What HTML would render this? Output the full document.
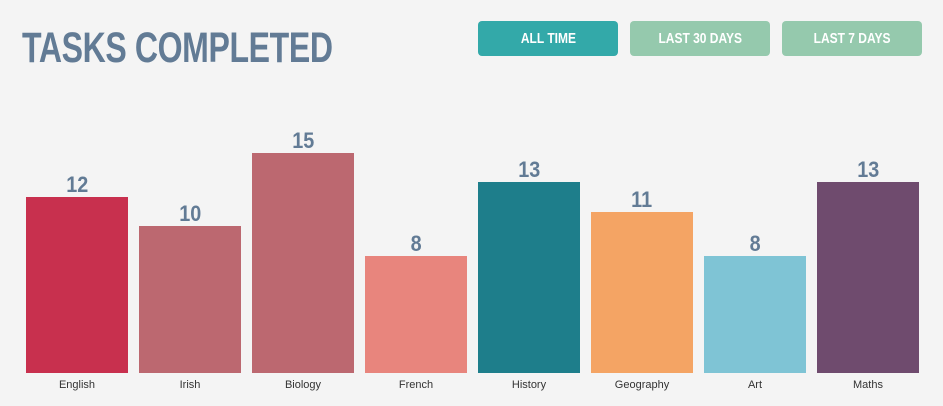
<!DOCTYPE html>
<html><head><style>
body{margin:0;width:943px;height:406px;background:#f4f4f4;font-family:"Liberation Sans",sans-serif;position:relative;overflow:hidden}
.t{position:absolute;left:22px;top:24px;font-size:43px;font-weight:bold;color:#627b95;transform:scaleX(0.745);transform-origin:left top;white-space:nowrap;letter-spacing:-0.5px}
.b{position:absolute;top:21px;width:140px;height:35px;border-radius:4px;color:#fff;font-weight:bold;font-size:15px;line-height:35px;text-align:center}
.b span{display:inline-block;transform:scaleX(0.8)}
.bar{position:absolute;width:102px;bottom:33px}
.n{position:absolute;width:102px;text-align:center;font-weight:bold;font-size:22px;color:#627b95}
.n span{display:inline-block;transform:scaleX(0.9)}
.l{position:absolute;width:102px;text-align:center;top:379px;font-size:11px;color:#333}
</style></head><body>
<div class="t">TASKS COMPLETED</div>
<div class="b" style="left:478px;background:#33a9a9"><span>ALL TIME</span></div>
<div class="b" style="left:630px;background:#95c9ad"><span>LAST 30 DAYS</span></div>
<div class="b" style="left:782px;background:#95c9ad"><span>LAST 7 DAYS</span></div>

<div class="bar" style="left:26px;top:197px;background:#c8304e"></div><div class="n" style="left:26px;top:172px"><span>12</span></div><div class="l" style="left:26px">English</div>
<div class="bar" style="left:139px;top:226px;background:#bc6870"></div><div class="n" style="left:139px;top:201px"><span>10</span></div><div class="l" style="left:139px">Irish</div>
<div class="bar" style="left:252px;top:153px;background:#bc6870"></div><div class="n" style="left:252px;top:128px"><span>15</span></div><div class="l" style="left:252px">Biology</div>
<div class="bar" style="left:365px;top:256px;background:#e8857d"></div><div class="n" style="left:365px;top:231px"><span>8</span></div><div class="l" style="left:365px">French</div>
<div class="bar" style="left:478px;top:182px;background:#1e7e8b"></div><div class="n" style="left:478px;top:157px"><span>13</span></div><div class="l" style="left:478px">History</div>
<div class="bar" style="left:591px;top:212px;background:#f4a464"></div><div class="n" style="left:591px;top:187px"><span>11</span></div><div class="l" style="left:591px">Geography</div>
<div class="bar" style="left:704px;top:256px;background:#7fc4d5"></div><div class="n" style="left:704px;top:231px"><span>8</span></div><div class="l" style="left:704px">Art</div>
<div class="bar" style="left:817px;top:182px;background:#6f4b6e"></div><div class="n" style="left:817px;top:157px"><span>13</span></div><div class="l" style="left:817px">Maths</div>
</body></html>
